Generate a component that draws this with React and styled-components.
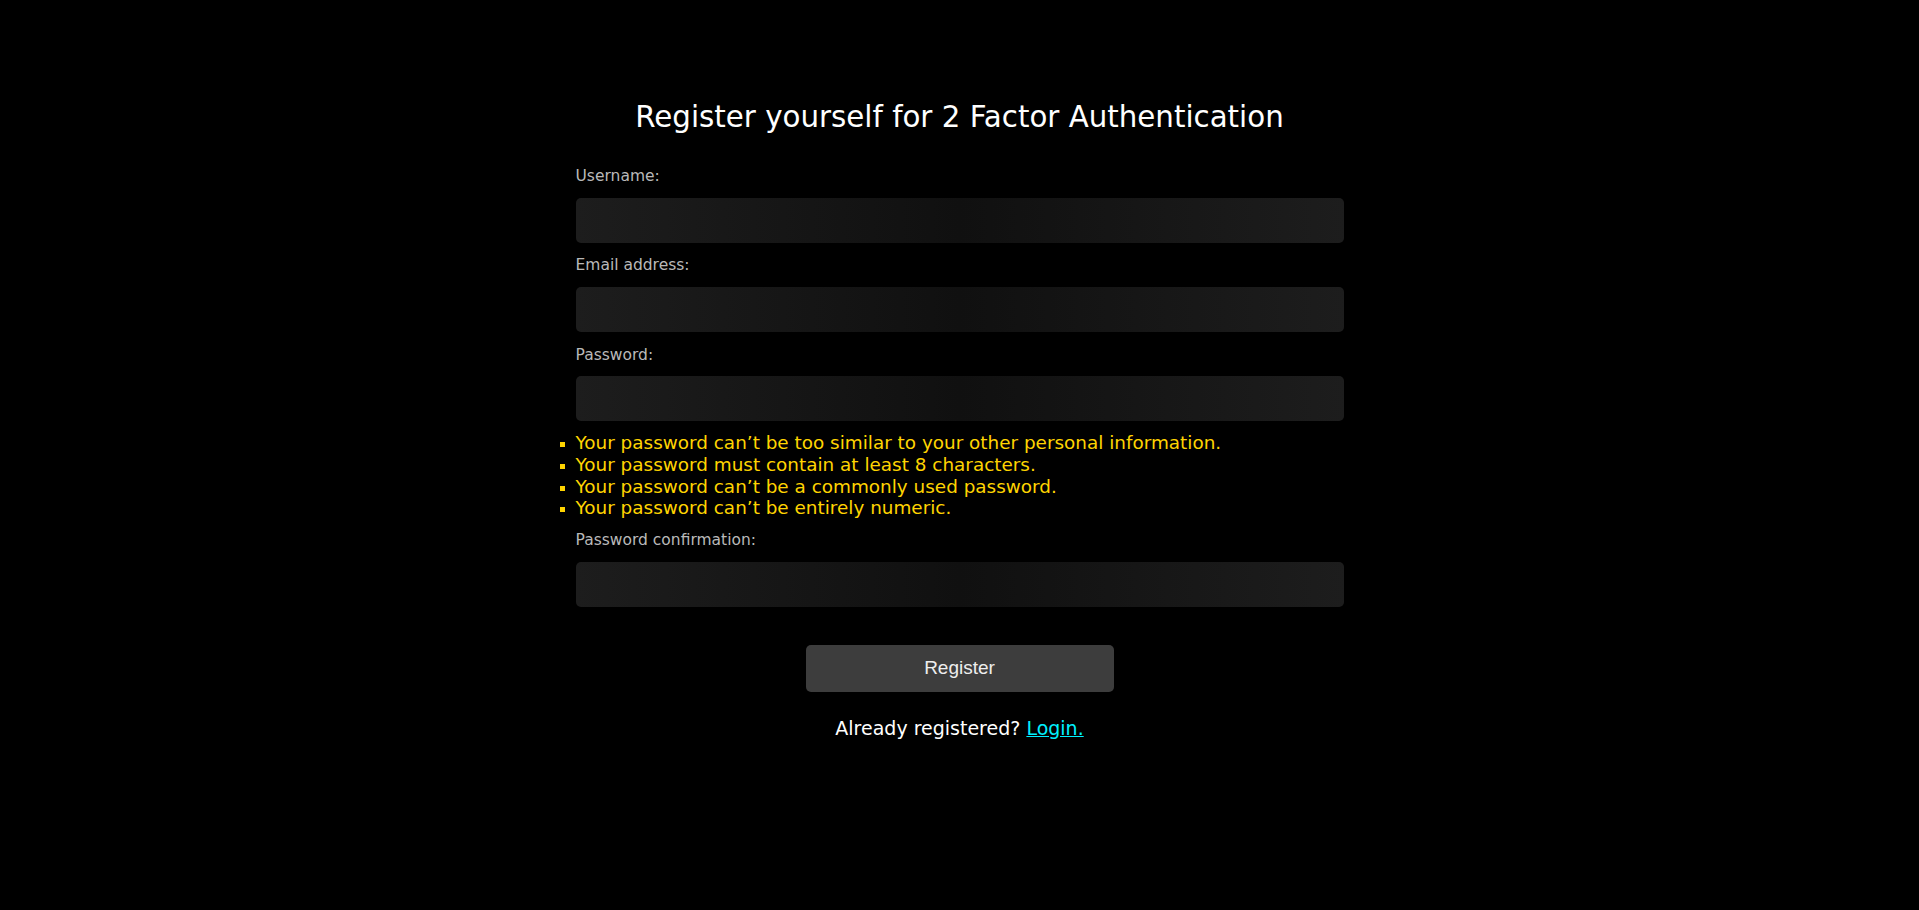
import React from 'react';
import styled, { createGlobalStyle } from 'styled-components';

const GlobalStyle = createGlobalStyle`
  html, body {
    margin: 0;
    padding: 0;
    background: #000;
  }
  body {
    font-family: "DejaVu Sans", Verdana, sans-serif;
    color: #fff;
  }
`;

const Page = styled.main`
  min-height: 910px;
  padding-top: 100px;
  box-sizing: border-box;
`;

const Title = styled.h2`
  margin: 0;
  text-align: center;
  font-size: 29.3px;
  line-height: 35px;
  font-weight: normal;
  color: #fff;
`;

const Form = styled.form`
  width: 768px;
  margin: 32px auto 0;
  display: flex;
  flex-direction: column;
`;

const Label = styled.label`
  display: block;
  margin-top: ${(p) => (p.$tight ? '12.3px' : '13.75px')};
  margin-bottom: 12.5px;
  font-size: 15.5px;
  line-height: 18px;
  color: #b9b9b9;
`;

const Input = styled.input`
  display: block;
  width: 100%;
  height: 45px;
  box-sizing: border-box;
  border: none;
  border-radius: 5px;
  background: linear-gradient(to right, #1d1d1d 0%, #101010 50%, #1d1d1d 100%);
  color: #eee;
  padding: 0 14px;
  font-size: 16px;
  outline: none;
`;

const Hints = styled.ul`
  margin: 11px 0 0;
  padding: 0;
  list-style: square outside;
  color: #ffd400;
  font-size: 18.4px;
  line-height: 21.8px;
`;

const Hint = styled.li`
  &::marker {
    font-size: 15px;
  }
`;

const Submit = styled.button`
  align-self: center;
  width: 308px;
  height: 47px;
  margin-top: 38px;
  border: none;
  border-radius: 5px;
  background: #3d3d3d;
  color: #eee;
  font-family: "Liberation Sans", Arial, sans-serif;
  font-size: 19px;
  cursor: pointer;
`;

const Footer = styled.p`
  margin: 25px 0 0;
  text-align: center;
  font-size: 19px;
  line-height: 22px;
  color: #fff;
`;

const LoginLink = styled.a`
  color: #00f0ff;
  text-decoration: underline;
`;

const fields = [
  { id: 'username', label: 'Username:', type: 'text' },
  { id: 'email', label: 'Email address:', type: 'email' },
  { id: 'password1', label: 'Password:', type: 'password' },
];

const hints = [
  'Your password can’t be too similar to your other personal information.',
  'Your password must contain at least 8 characters.',
  'Your password can’t be a commonly used password.',
  'Your password can’t be entirely numeric.',
];

export default function App() {
  return (
    <Page>
      <GlobalStyle />
      <Title>Register yourself for 2 Factor Authentication</Title>
      <Form onSubmit={(e) => e.preventDefault()}>
        {fields.map((f, i) => (
          <React.Fragment key={f.id}>
            <Label htmlFor={f.id} style={i === 0 ? { marginTop: 0 } : undefined}>
              {f.label}
            </Label>
            <Input id={f.id} type={f.type} />
          </React.Fragment>
        ))}
        <Hints>
          {hints.map((h) => (
            <Hint key={h}>{h}</Hint>
          ))}
        </Hints>
        <Label htmlFor="password2" $tight>Password confirmation:</Label>
        <Input id="password2" type="password" />
        <Submit type="submit">Register</Submit>
      </Form>
      <Footer>
        Already registered? <LoginLink href="#">Login.</LoginLink>
      </Footer>
    </Page>
  );
}
